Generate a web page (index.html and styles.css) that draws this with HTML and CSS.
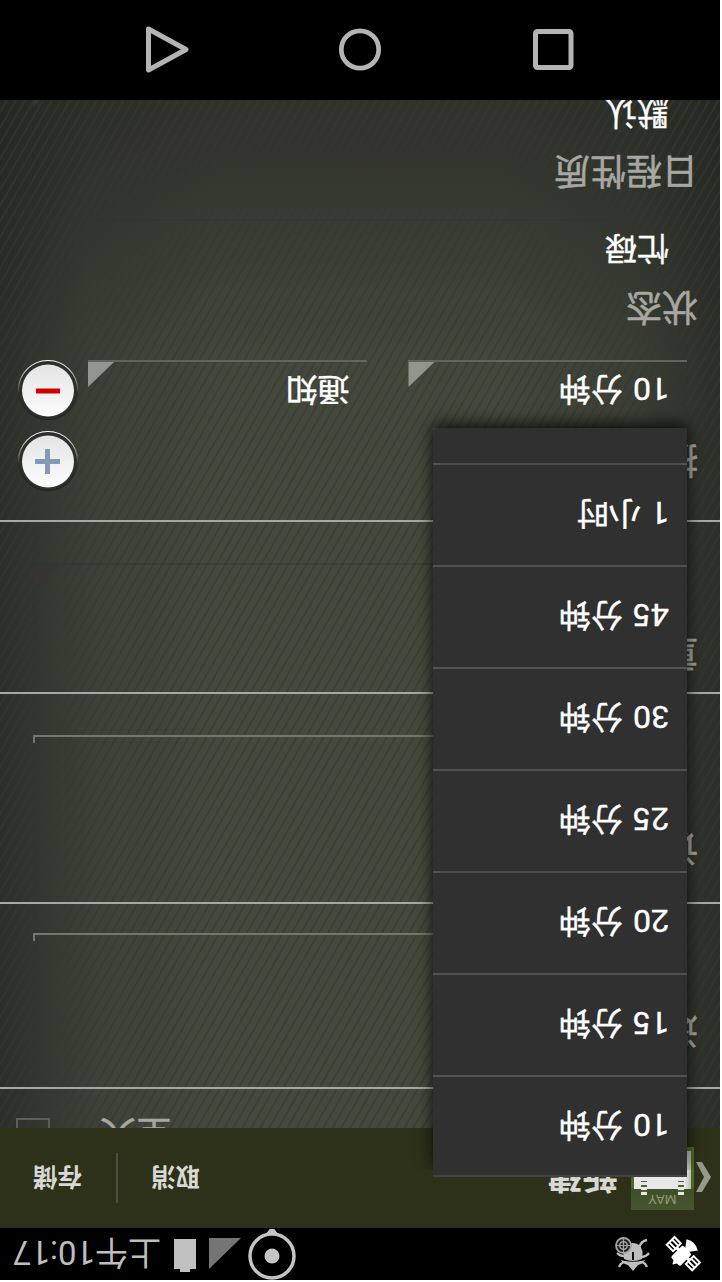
FILE: index.html
```html
<!DOCTYPE html>
<html lang="zh-CN">
<head>
<meta charset="utf-8">
<title>新建</title>
<link rel="stylesheet" href="styles.css">
</head>
<body>
<div class="phone">
  <header class="status">
    <svg class="sat" width="36" height="36" viewBox="0 0 36 36">
      <g transform="rotate(45 18 18)">
        <rect x="0" y="13" width="9" height="11" fill="none" stroke="#fff" stroke-width="2"/>
        <path d="M0 16.500h9M0 20.500h9" stroke="#fff" stroke-width="2"/>
        <rect x="27" y="13" width="9" height="11" fill="none" stroke="#fff" stroke-width="2"/>
        <path d="M27 16.500h9M27 20.500h9" stroke="#fff" stroke-width="2"/>
        <path d="M9 18h18" stroke="#fff" stroke-width="3"/>
        <rect x="11.500" y="7" width="13" height="17" rx="2" fill="#fff"/>
        <path d="M16 23h4l6 8q-8 5-16 0z" fill="#fff"/>
        <path d="M15 8l3-5 3 5z" fill="#fff"/>
      </g>
    </svg>
    <svg class="bug" width="36" height="36" viewBox="0 0 36 36">
      <path d="M4 5q3 7 9 4h10q6 3 9-4M2 19q3-4 8-4M4 32q6-1 8-8M34 19q-4-4-9-3" fill="none" stroke="#bebebe" stroke-width="2.300"/>
      <path d="M18 1l5 6q5 1 7 5-5-2-12-2t-12 2q2-4 7-5z" fill="#bebebe"/>
      <path d="M9 13q9-4 18 0 2 10-3 14-6 4-12 0-5-4-3-14z" fill="#bebebe"/>
      <path d="M18 12v8" stroke="#111" stroke-width="2"/>
      <circle cx="27.500" cy="26.500" r="7.500" fill="#222" stroke="#a5a5a5" stroke-width="1.800"/>
      <circle cx="27.500" cy="26.500" r="3.800" fill="none" stroke="#a5a5a5" stroke-width="1.500"/>
      <path d="M27.500 19v15M20 26.500h15" stroke="#a5a5a5" stroke-width="1.200"/>
    </svg>
    <svg class="ring" width="50" height="52" viewBox="0 0 50 52">
      <circle cx="25" cy="24" r="22" fill="none" stroke="#c4c4c4" stroke-width="3.500"/>
      <circle cx="25" cy="24" r="7.500" fill="#c4c4c4"/>
      <path d="M15 45q5 1 7.500 6h5q2.500-5 7.500-6z" fill="#c4c4c4"/>
    </svg>
    <svg class="signal" width="32" height="31" viewBox="0 0 32 31"><path d="M32 0v31H0z" fill="#757575"/></svg>
    <svg class="battery" width="22" height="33" viewBox="0 0 22 33"><path d="M6 0h10v3h6v30H0V3h6z" fill="#c0c0c0"/></svg>
    <span class="clock">上午10:17</span>
  </header>

  <nav class="actions">
    <svg class="back" width="15" height="30" viewBox="0 0 15 30"><path d="M9 0h6L7 15l8 15H9L0 15z" fill="#959a89"/></svg>
    <div class="calendar">
      <span class="month">MAY</span>
      <div class="sheet"><i class="clip"></i><i class="clip"></i></div>
    </div>
    <span class="title">新建</span>
    <span class="action">取消</span>
    <i class="split"></i>
    <span class="action">存储</span>
  </nav>

  <main class="form">
    <section class="row allday"><span class="label">全天</span><i class="check"></i></section>
    <section class="row guests"><span class="label">邀请</span><div class="input"></div></section>
    <section class="row notes"><span class="label">说明</span><div class="input"></div></section>
    <section class="row repeat"><span class="label">重复</span><div class="spinner off"></div></section>
    <section class="row remind">
      <div class="head"><span class="label">提醒</span>
        <svg class="round" width="62" height="62" viewBox="0 0 62 62"><use href="#disc"/><path d="M31.500 18v25M19 30.500h25" stroke="#8399b4" stroke-width="5"/></svg>
      </div>
      <div class="entry">
        <div class="spinner">10 分钟</div>
        <div class="spinner">通知</div>
        <svg class="round" width="62" height="62" viewBox="0 0 62 62"><use href="#disc"/><path d="M19 30h24" stroke="#d00000" stroke-width="5"/></svg>
      </div>
    </section>
    <section class="group state"><span class="label">状态</span><div class="spinner off">忙碌</div></section>
    <section class="group kind"><span class="label">日程性质</span><div class="spinner off">默认</div></section>
  </main>

  <footer class="keys">
    <svg width="44" height="48" viewBox="0 0 44 48"><rect x="4" y="5.500" width="35.500" height="36" rx="2" fill="none" stroke="#b4b4b4" stroke-width="5"/></svg>
    <svg width="44" height="48" viewBox="0 0 44 48"><circle cx="22" cy="23.500" r="18.700" fill="none" stroke="#b4b4b4" stroke-width="4.700"/></svg>
    <svg width="44" height="48" viewBox="0 0 44 48"><path d="M40.500 3v41L3 23.500z" fill="none" stroke="#b4b4b4" stroke-width="5" stroke-linejoin="round"/></svg>
  </footer>

  <ul class="menu">
    <li>10 分钟</li><li>15 分钟</li><li>20 分钟</li><li>25 分钟</li><li>30 分钟</li><li>45 分钟</li><li>1 小时</li><li></li>
  </ul>
</div>
<svg class="defs" width="0" height="0">
  <defs>
    <linearGradient id="face" x1="0" y1="0" x2="0" y2="1"><stop offset="0" stop-color="#fcfcfc"/><stop offset="1" stop-color="#e4e4e4"/></linearGradient>
    <linearGradient id="rim" x1="0" y1="0" x2="0" y2="1"><stop offset="0" stop-color="#1f211d"/><stop offset=".45" stop-color="#2c2e29"/><stop offset=".6" stop-color="#777a72"/><stop offset="1" stop-color="#fff"/></linearGradient>
    <g id="disc"><circle cx="31" cy="31" r="29.500" fill="#2c2e29" stroke="url(#rim)" stroke-width="1.200"/><circle cx="31" cy="30.500" r="26" fill="url(#face)"/></g>
  </defs>
</svg>
</body>
</html>
```
FILE: styles.css
```css
* { box-sizing: border-box; }
body { margin: 0; background: #fff; font-family: Roboto, "Noto Sans CJK SC", sans-serif; }
.defs { position: absolute; }
.phone { position: relative; width: 720px; height: 1280px; overflow: hidden; background: #000; transform: rotate(180deg); display: flex; flex-direction: column; }
.phone svg { flex: none; display: block; }

.status { height: 52px; flex: none; display: flex; align-items: flex-start; padding-left: 19px; background: #000; color: #bebebe; }
.sat { margin-top: 8px; overflow: visible; }
.bug { margin: 8px 0 0 14px; }
.ring { margin: 0 0 0 318px; }
.signal { margin: 11px 0 0 6px; }
.battery { margin: 8px 0 0 13px; }
.clock { margin: 8px 0 0 13px; font-size: 33px; line-height: 40px; white-space: nowrap; }

.actions { height: 100px; flex: none; display: flex; align-items: center; padding-left: 9px; background: #2d3119; color: #d8d9d4; }
.back { margin-top: 2px; }
.calendar { width: 63px; height: 63px; margin: -2px 0 0 2px; background: linear-gradient(#46552f, #3d5029 21px, #4e6526 22px, #557020); display: flex; flex-direction: column; align-items: center; }
.month { height: 21px; line-height: 21px; font-size: 13.500px; color: #8b9a6e; }
.sheet { width: 57px; height: 38px; background: linear-gradient(90deg, #bbb, #e8e8e8 6px, #e8e8e8); display: flex; justify-content: space-between; padding: 0 7px; }
.clip { width: 6px; height: 14px; margin-top: -6px; background: repeating-linear-gradient(#e8e8de 0 3px, #53603c 3px 5px); }
.title { width: 74px; margin: 5px 0 0 13px; font-size: 35.500px; line-height: 40px; font-weight: 700; }
.action { margin-top: 4px; font-size: 24.500px; line-height: 30px; font-weight: 700; }
.title + .action { margin-left: 344px; }
.split { width: 2px; height: 50px; margin: 0 34px 0 33px; background: #4d513b; }

.form {
  height: 1028px; flex: none; overflow: hidden; color: #fff;
  background:
    repeating-linear-gradient(120deg, rgba(54,56,48,.6) 0 .8px, transparent 1.800px 6.800px, rgba(54,56,48,.6) 7.800px),
    linear-gradient(90deg, rgba(33,36,31,.7), rgba(33,36,31,.25) 90px, transparent 220px 500px, rgba(33,36,31,.25) 630px, rgba(33,36,31,.7)),
    linear-gradient(#45493d 0 65%, #43473b 75%, #2f312a);
}
.label { font-size: 36px; line-height: 44px; color: #a7a8a3; white-space: nowrap; -webkit-text-stroke: .5px; }
.row { border-bottom: 2px solid #a7a8a3; }
.allday { height: 41px; display: flex; align-items: flex-end; padding-left: 548px; }
.allday .label { margin-bottom: 22px; }
.check { width: 34px; height: 34px; margin: 0 0 29px 50px; border: 2px solid #5c5e57; }
.guests, .notes, .repeat { display: flex; flex-direction: column; padding: 0 33px 0 22px; }
.guests { height: 185px; padding-top: 35px; }
.notes { height: 210px; padding-top: 33px; }
.repeat { height: 172px; padding-top: 17px; }
.input { height: 8px; margin: auto 0 29px 11px; border: 2px solid #74776c; border-top: 0; }
.notes .input { margin-bottom: 41px; }
.repeat .spinner { height: 60px; margin: auto 0 41px 11px; }
.remind { height: 161px; border: 0; padding: 28px 17px 0 22px; }
.head { height: 71px; display: flex; justify-content: space-between; align-items: flex-start; }
.head .label { margin-top: 11px; }
.entry { display: flex; align-items: flex-start; padding-left: 11px; }
.entry .spinner { width: 279px; height: 61px; margin-right: 41px; padding-top: 12px; }
.entry .spinner + .spinner { width: 280px; margin-right: 9px; }
.spinner { position: relative; font-size: 32px; line-height: 40px; padding-left: 18px; border-bottom: 2px solid #61645a; white-space: nowrap; word-spacing: 2px; -webkit-text-stroke: .4px; }
.spinner::after { content: ""; position: absolute; right: 0; bottom: 0; width: 26px; height: 25px; background: #93958e; clip-path: polygon(100% 0, 100% 100%, 0 100%); }
.off { border-color: rgba(51,51,49,.4); }
.off::after { background: #363532; }
.group { padding: 0 33px 0 22px; }
.group .label { display: block; }
.group .spinner { margin-left: 11px; height: 68px; }
.state { padding-top: 31px; height: 140px; }
.state .spinner { padding-top: 16px; height: 65px; }
.state .spinner::after { opacity: 0; }
.kind { padding-top: 27px; }
.kind .spinner { padding-top: 15px; }

.keys { height: 100px; flex: none; display: flex; align-items: center; justify-content: center; gap: 149px; background: #000; padding-top: 1px; }

.menu { position: absolute; left: 33px; top: 103px; width: 254px; height: 749px; margin: 0; padding: 0; list-style: none; overflow: hidden; background: #303030; border-top: 2px solid #414141; border-radius: 0 0 4px 4px; }
.menu li { height: 102px; padding: 2px 0 0 18px; color: #fff; font-size: 32px; line-height: 100px; word-spacing: 2px; border-bottom: 2px solid #515151; -webkit-text-stroke: .4px; }
.menu li:first-child { margin-top: -2px; }
.menu li:last-child { border: 0; }
.phone::after { content: ""; position: absolute; left: 33px; top: 110px; width: 254px; height: 742px; box-shadow: 0 4px 15px rgba(0,0,0,.8); clip-path: polygon(-30px 0, 0 0, 0 740px, 254px 740px, 254px 0, 284px 0, 284px 780px, -30px 780px); }
```
